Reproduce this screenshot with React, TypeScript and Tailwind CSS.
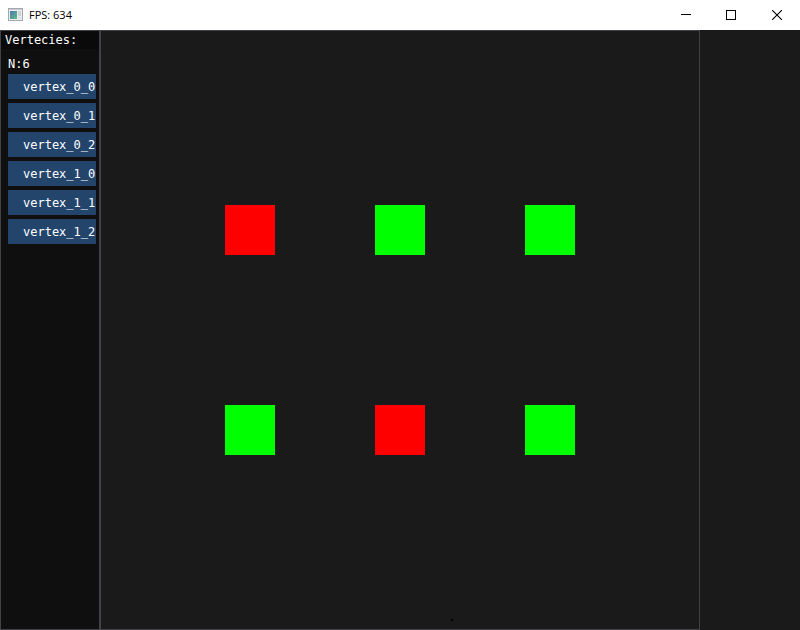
import React from "react";

const vertices = [
  { name: "vertex_0_0", active: true },
  { name: "vertex_0_1", active: false },
  { name: "vertex_0_2", active: false },
  { name: "vertex_1_0", active: false },
  { name: "vertex_1_1", active: true },
  { name: "vertex_1_2", active: false },
];

function AppIcon() {
  return (
    <svg width="16" height="16" viewBox="0 0 16 16" shapeRendering="crispEdges" aria-hidden="true">
      <defs>
        <linearGradient id="screen" x1="0" y1="0" x2="1" y2="1">
          <stop offset="0" stopColor="#4a78b8" />
          <stop offset="1" stopColor="#5fbf80" />
        </linearGradient>
      </defs>
      <rect x="0" y="1" width="15" height="13" fill="#a3a6aa" />
      <rect x="1" y="2" width="13" height="11" fill="#eceef0" />
      <rect x="1" y="2" width="13" height="1" fill="#c9cdd2" />
      <rect x="2" y="4" width="7" height="8" fill="url(#screen)" />
      <rect x="10" y="4" width="3" height="5" fill="#cdd3d8" />
      <rect x="10" y="10" width="3" height="2" fill="#dadfe2" />
    </svg>
  );
}

function TitleBar() {
  const control = "flex h-full w-[46px] items-center justify-center";
  return (
    <header className="flex h-[30px] items-center bg-white text-black">
      <div className="flex flex-1 items-center gap-[5px] pl-2">
        <AppIcon />
        <h1 className="font-['Open_Sans','Noto_Sans',sans-serif] text-[11px] leading-4">FPS: 634</h1>
      </div>
      <div className="flex h-full">
        <button type="button" aria-label="Minimize" className={control}>
          <svg width="10" height="10" viewBox="0 0 10 10" shapeRendering="crispEdges" className="overflow-visible">
            <path d="M1 4.5h10" stroke="#000" />
          </svg>
        </button>
        <button type="button" aria-label="Maximize" className={control}>
          <svg width="10" height="10" viewBox="0 0 10 10" shapeRendering="crispEdges">
            <rect x="0.5" y="0.5" width="9" height="9" fill="none" stroke="#000" />
          </svg>
        </button>
        <button type="button" aria-label="Close" className={control}>
          <svg width="10" height="10" viewBox="0 0 10 10">
            <path d="M0 0l10 10M10 0L0 10" stroke="#000" strokeWidth="1.1" />
          </svg>
        </button>
      </div>
    </header>
  );
}

export default function App() {
  return (
    <div className="flex min-h-screen flex-col bg-[#1a1a1a]">
      <TitleBar />
      <div className="flex flex-1">
        <aside className="w-[100px] shrink-0 border border-[#424148] bg-[#0f0f0f] font-['DejaVu_Sans_Mono',monospace] text-[12px] leading-[18px] text-white">
          <h2 className="bg-[#0a0a0a] pl-1">Vertecies:</h2>
          <div className="pt-[6px] pr-[3px] pl-[7px]">
            <p>N:6</p>
            <ul className="mt-px flex flex-col gap-1">
              {vertices.map((v) => (
                <li key={v.name}>
                  <button type="button" className="block h-[25px] w-full bg-[#23456c] pl-[15px] text-left">
                    {v.name}
                  </button>
                </li>
              ))}
            </ul>
          </div>
        </aside>
        <main className="relative flex flex-1 items-center justify-center border border-[#424148]">
          <div className="grid grid-cols-3 gap-x-[100px] gap-y-[150px]">
            {vertices.map((v) => (
              <div key={v.name} className={v.active ? "size-[50px] bg-[#ff0000]" : "size-[50px] bg-[#00ff00]"} />
            ))}
          </div>
          <span className="absolute bottom-2 left-[350px] size-[2px] bg-black" />
        </main>
        <div className="w-[100px] shrink-0" />
      </div>
    </div>
  );
}
